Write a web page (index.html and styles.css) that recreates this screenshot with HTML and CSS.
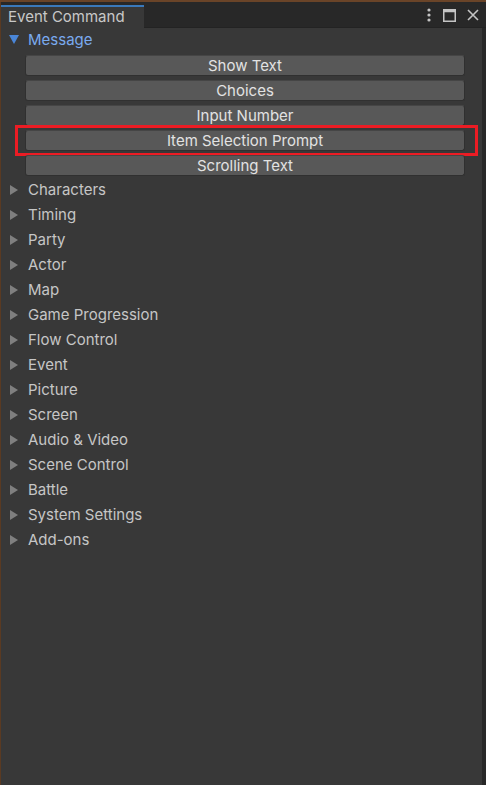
FILE: index.html
```html
<!DOCTYPE html>
<html>
<head>
<meta charset="utf-8">
<link rel="stylesheet" href="styles.css">
</head>
<body>
<div class="frame">
  <div class="topedge"></div>
  <div class="window">
    <div class="header">
      <div class="tab">Event Command</div>
      <div class="tools">
        <svg class="ico" width="6" height="14" viewBox="0 0 6 14"><circle cx="3" cy="2" r="1.6" fill="#c4c4c4"/><circle cx="3" cy="7" r="1.6" fill="#c4c4c4"/><circle cx="3" cy="12" r="1.6" fill="#c4c4c4"/></svg>
        <svg class="ico" width="13" height="13" viewBox="0 0 13 13"><rect x="0.75" y="0.75" width="11.5" height="11.5" fill="none" stroke="#c4c4c4" stroke-width="1.5"/><rect x="0.75" y="0.75" width="11.5" height="2.5" fill="#c4c4c4"/></svg>
        <svg class="ico" width="12" height="12" viewBox="0 0 12 12"><path d="M1 1 L11 11 M11 1 L1 11" stroke="#c4c4c4" stroke-width="1.6"/></svg>
      </div>
    </div>
    <div class="body">
      <div class="content">
        <div class="cat open">
          <span class="tri-down"></span><span class="label">Message</span>
        </div>
        <div class="buttons">
          <div class="btn">Show Text</div>
          <div class="btn">Choices</div>
          <div class="btn">Input Number</div>
          <div class="btn hl">Item Selection Prompt<span class="mark"></span></div>
          <div class="btn">Scrolling Text</div>
        </div>
        <div class="cat"><span class="tri"></span><span class="label">Characters</span></div>
        <div class="cat"><span class="tri"></span><span class="label">Timing</span></div>
        <div class="cat"><span class="tri"></span><span class="label">Party</span></div>
        <div class="cat"><span class="tri"></span><span class="label">Actor</span></div>
        <div class="cat"><span class="tri"></span><span class="label">Map</span></div>
        <div class="cat"><span class="tri"></span><span class="label">Game Progression</span></div>
        <div class="cat"><span class="tri"></span><span class="label">Flow Control</span></div>
        <div class="cat"><span class="tri"></span><span class="label">Event</span></div>
        <div class="cat"><span class="tri"></span><span class="label">Picture</span></div>
        <div class="cat"><span class="tri"></span><span class="label">Screen</span></div>
        <div class="cat"><span class="tri"></span><span class="label">Audio &amp; Video</span></div>
        <div class="cat"><span class="tri"></span><span class="label">Scene Control</span></div>
        <div class="cat"><span class="tri"></span><span class="label">Battle</span></div>
        <div class="cat"><span class="tri"></span><span class="label">System Settings</span></div>
        <div class="cat"><span class="tri"></span><span class="label">Add-ons</span></div>
      </div>
      <div class="rightedge"></div>
    </div>
  </div>
</div>
</body>
</html>
```

FILE: styles.css
```css
* { box-sizing: border-box; }
html, body { margin: 0; padding: 0; }
body {
  width: 486px;
  height: 785px;
  overflow: hidden;
  background: #383838;
  font-family: Inter, "Noto Sans", sans-serif;
  font-size: 15px;
  color: #c4c4c4;
}
.frame {
  height: 785px;
  display: flex;
  flex-direction: column;
  background: #5a3a22;
}
.topedge {
  height: 2px;
  background: #6a4428;
  flex: none;
}
.window {
  flex: 1;
  display: flex;
  flex-direction: column;
  margin-left: 1px;
  background: #383838;
}
.header {
  height: 26px;
  flex: none;
  background: #282828;
  display: flex;
  align-items: flex-end;
  border-bottom: 1px solid #232323;
}
.tab {
  width: 143px;
  height: 23px;
  background: #383838;
  border-top: 2px solid #3a79bb;
  padding-left: 7px;
  line-height: 20px;
  color: #c8c8c8;
  margin-bottom: -1px;
}
.tools {
  margin-left: auto;
  display: flex;
  align-items: center;
  gap: 11px;
  padding-right: 7px;
  height: 24px;
}
.ico { display: block; }
.body {
  flex: 1;
  display: flex;
}
.content {
  flex: 1;
}
.rightedge {
  width: 4px;
  background: #282828;
  flex: none;
}
.cat {
  height: 25px;
  display: flex;
  align-items: center;
}
.cat.open { height: 23px; }
.tri, .tri-down {
  width: 0;
  height: 0;
  flex: none;
}
.tri {
  border-top: 5px solid transparent;
  border-bottom: 5px solid transparent;
  border-left: 8px solid #7f7f7f;
  margin-left: 9px;
  margin-right: 10px;
}
.tri-down {
  border-left: 5px solid transparent;
  border-right: 5px solid transparent;
  border-top: 9px solid #4a86d8;
  margin-left: 8px;
  margin-right: 9px;
}
.label { color: #c6c6c6; }
.open .label { color: #7aaaef; }
.buttons {
  display: flex;
  flex-direction: column;
  gap: 4px;
  padding: 4px 17px 1px 24px;
}
.btn {
  height: 21px;
  background: #585858;
  border: 1px solid #303030;
  border-top-color: #454545;
  border-radius: 3px;
  text-align: center;
  line-height: 19px;
  color: #e2e2e2;
  position: relative;
}
.mark {
  position: absolute;
  left: -11px;
  right: -14px;
  top: -6px;
  bottom: -6px;
  border: 3px solid #ec1c24;
  pointer-events: none;
}
```
